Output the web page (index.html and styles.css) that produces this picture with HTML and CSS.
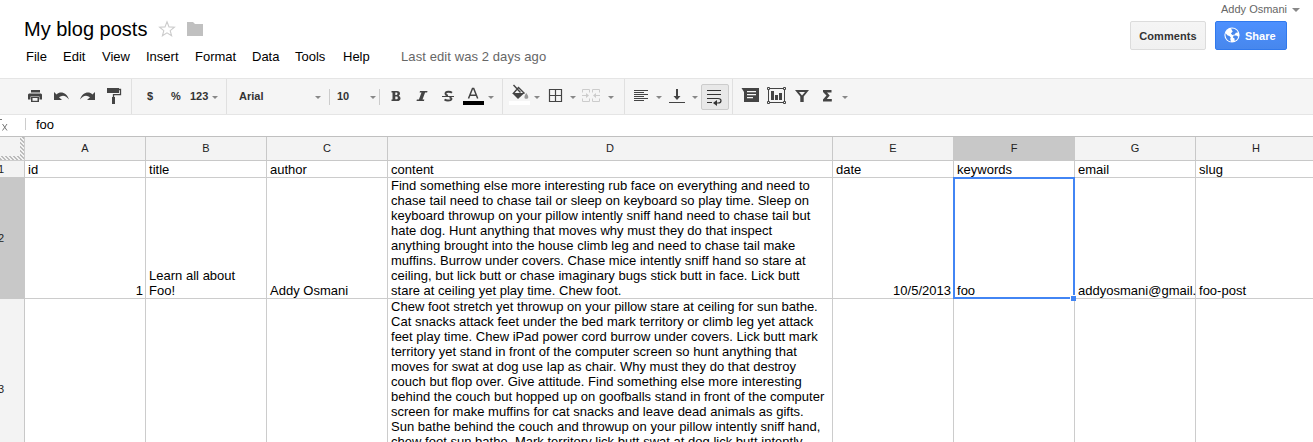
FILE: index.html
```html
<!DOCTYPE html>
<html lang="en">
<head>
<meta charset="utf-8">
<title>My blog posts</title>
<link rel="stylesheet" href="styles.css">
</head>
<body>
<header class="header">
  <div class="doc">
    <div class="title-row">
      <h1 class="title">My blog posts</h1>
      <svg class="star" width="18" height="18" viewBox="158 20 18 18"><path d="M167 21.8l2 5.1 5.4.3-4.2 3.4 1.4 5.2-4.6-2.9-4.6 2.9 1.4-5.2-4.2-3.4 5.4-.3z" fill="none" stroke="#ccc" stroke-width="1.100"/></svg>
      <svg class="folder" width="16" height="15" viewBox="187 22 16 15"><path d="M187 22h6l2 2h8v12h-16z" fill="#c0c0c0"/></svg>
    </div>
    <nav class="menu">
      <span class="m-file">File</span><span class="m-edit">Edit</span><span class="m-view">View</span><span class="m-insert">Insert</span><span class="m-format">Format</span><span class="m-data">Data</span><span class="m-tools">Tools</span><span class="m-help">Help</span><span class="last-edit">Last edit was 2 days ago</span>
    </nav>
  </div>
  <div class="account">
    <div class="user">Addy Osmani<i class="caret"></i></div>
    <div class="buttons">
      <button class="btn">Comments</button>
      <button class="btn share"><svg width="16" height="18" viewBox="0 0 16 18"><circle cx="8" cy="8" r="7.600" fill="#fff"/><path d="M1.500 6.200l2.200 2.200 1.700.5 1.400 1.700-.6 1.400.8 2.600C3.600 14.200 1.200 11 1.500 6.200zM7 1.600l3.400.2 2.400 1.800 1.200 2-2.200.2-1 1.600-2.500.5-1.400-1.500 1.800-2zM9.600 8.600l2.700-.2 2 1.400c-.7 2-2 3.600-3.600 4.200l-.2-2.400-1.600-1.200z" fill="#4787ed"/></svg>Share</button>
    </div>
  </div>
</header>

<div class="toolbar">
  <div class="group first">
    <svg width="24" height="35" viewBox="24 79 24 35" fill="#444"><path d="M31 90h9v2.500h-9zM29 93.500h12l1 1v5h-2.500v-3h-9v3H28v-5z"/><path d="M31 97h8v5h-8z"/><path d="M32.500 98h5v2.800h-5z" fill="#f5f5f5"/></svg>
    <svg width="27" height="35" viewBox="48 79 27 35" fill="#444"><path d="M54 92v8h8l-3-2.800c3.500-2.700 7-1.800 10 2.300-2-6.500-8.500-9-12.400-5z"/></svg>
    <svg width="26" height="35" viewBox="75 79 26 35" fill="#444"><path d="M95 92v8h-8l3-2.800c-3.500-2.700-7-1.800-10 2.300 2-6.500 8.500-9 12.400-5z"/></svg>
    <svg width="30" height="35" viewBox="101 79 30 35" fill="#444"><path d="M107 88h12v5h-12z"/><path d="M119 89.500h1.500v5.200H113.500V97" fill="none" stroke="#444" stroke-width="1.300"/><path d="M112 97h3v7h-3z"/></svg>
  </div>
  <div class="group g-num">
    <b class="dollar">$</b><b class="percent">%</b><b class="n123">123</b><i class="caret"></i>
  </div>
  <div class="group g-font">
    <b class="font-name">Arial</b><i class="caret"></i><i class="short"></i><b class="font-size">10</b><i class="caret"></i><i class="short s2"></i>
    <svg width="28" height="35" viewBox="380 79 28 35" fill="#444"><path fill-rule="evenodd" d="M391.500 91h5.500q3 0 3 2.600 0 1.500-1.300 2.100 1.800.6 1.800 2.500 0 2.800-3.400 2.800h-5.600v-1.600h1v-6.800h-1zM395.300 92.600v2.300h1.200q1 0 1-1.100t-1-1.200zM395.300 96.500v2.800h1.400q1.100 0 1.100-1.400t-1.100-1.400z"/></svg>
    <svg width="26" height="35" viewBox="408 79 26 35" fill="#444"><path d="M420 91h7.500l-.4 1.500h-2l-2.600 7h1.800L424 101h-7.500l.4-1.500h2l2.600-7h-1.900z"/></svg>
    <svg width="26" height="35" viewBox="434 79 26 35"><path d="M452 92.700c-1.500-1.200-6.500-1.600-6.500.9 0 1.200 1.200 1.800 2.500 2M449.500 97.300c3 1 2.600 3.200-1.500 3.200-1.300 0-2.500-.3-3.500-1" fill="none" stroke="#444" stroke-width="1.900"/><path d="M442 96h12v1h-12z" fill="#444"/></svg>
    <svg width="28" height="35" viewBox="460 79 28 35"><path d="M468.500 98.500l4-10h1.200l4 10M470 95.200h6.200" fill="none" stroke="#444" stroke-width="1.500"/><path d="M463 101h21v4h-21z"/></svg><i class="caret"></i>
  </div>
  <div class="group g-fill">
    <svg width="31" height="35" viewBox="503 79 31 35" fill="#444"><path d="M509 101h21v4h-21z" fill="#fff"/><path d="M512 93h12.500L518 99z"/><path d="M513.300 93.500l5.200-6 6 6M513.500 85l7 7.500" fill="none" stroke="#444" stroke-width="1.400"/><path d="M526.300 93c3 4 2.200 5.800 0 5.800s-2.800-2 0-5.800z" fill="#999"/></svg><i class="caret"></i>
    <svg width="30" height="35" viewBox="540 79 30 35" fill="none" stroke="#444"><path d="M549.500 89.500h12v12h-12zM555.500 90v12M549 95.500h13" stroke-width="1.200"/></svg><i class="caret"></i>
    <svg width="32" height="35" viewBox="576 79 32 35" fill="none" stroke="#ccc"><path d="M589.500 92.500v-3h-7v3M582.500 98.500v3h7v-3M592.500 92.500v-3h7v3M599.500 98.500v3h-7v-3M582 95.500h6M600 95.500h-6"/><path d="M586 93l3 2.500-3 2.500zM596 93l-3 2.500 3 2.500z" fill="#ccc" stroke="none"/></svg><i class="caret"></i>
  </div>
  <div class="group g-align">
    <svg width="31" height="35" viewBox="625 79 31 35" fill="#444"><path d="M634 90h14v1h-14zM634 92h10v1h-10zM634 94h14v1h-14zM634 96h10v1h-10zM634 98h14v1h-14zM634 100h10v1h-10z"/></svg><i class="caret"></i>
    <svg width="30" height="35" viewBox="662 79 30 35" fill="#444"><path d="M669 102h16v1h-16zM676 89h2v7h2.500l-3.500 4-3.500-4h2.500z"/></svg><i class="caret"></i>
    <span class="wrap"><svg width="26" height="24" viewBox="702 84 26 24" fill="none" stroke="#333"><path d="M707 89.500h14M707 93.500h14M707 97.500h11c4 0 4 4.500 0 4.500h-3M707 101.500h5" stroke-width="1.200"/><path d="M717 99l-4 3 4 3z" fill="#333" stroke="none"/></svg></span>
  </div>
  <div class="group g-last">
    <svg width="30" height="35" viewBox="733 79 30 35" fill="#444"><path d="M741.500 88H759v14h-15V92z"/><path d="M747 91h9v1.200h-9zM747 94h9v1.200h-9zM747 97h6v1.200h-6z" fill="#f5f5f5"/></svg>
    <svg width="28" height="35" viewBox="763 79 28 35" fill="#444"><path d="M768.500 88.500h16v14h-16z" fill="none" stroke="#444"/><path d="M771 91h3v9H771zM775 95h3v5H775zM779 93h3v7H779z"/><path d="M767.500 87.500h2v2h-2zM783.500 87.500h2v2h-2zM767.500 101.500h2v2h-2zM783.500 101.500h2v2h-2z" fill="#f5f5f5" stroke="#444"/></svg>
    <svg width="26" height="35" viewBox="791 79 26 35" fill="#444"><path fill-rule="evenodd" d="M795 90h14l-5.300 6.500V102h-3.400v-5.500zM799 92l3 3.500 3-3.500z"/></svg>
    <svg width="25" height="35" viewBox="817 79 25 35" fill="#444"><path d="M823 90h8.500v2.500H827l2.700 3-2.900 3.500h5v2.500H823v-2l3.500-4-3.500-3.500z"/></svg><i class="caret"></i>
  </div>
</div>

<div class="formula">
  <svg width="24" height="21" viewBox="0 115 24 21" fill="none" stroke="#777"><path d="M0 119.500h2M2.500 124l4.500 6.500M7 124l-4.500 6.500"/></svg>
  <span class="formula-text">foo</span>
</div>

<main class="sheet">
  <div class="corner"></div>
  <div class="col">A</div><div class="col">B</div><div class="col">C</div><div class="col">D</div><div class="col">E</div><div class="col active">F</div><div class="col">G</div><div class="col">H</div>

  <div class="rownum"><span>1</span></div>
  <div class="cell">id</div><div class="cell">title</div><div class="cell">author</div><div class="cell">content</div><div class="cell">date</div><div class="cell">keywords</div><div class="cell">email</div><div class="cell">slug</div>

  <div class="rownum active"><span>2</span></div>
  <div class="cell right">1</div>
  <div class="cell">Learn all about<br>Foo!</div>
  <div class="cell">Addy Osmani</div>
  <div class="cell">Find something else more interesting rub face on everything and need to<br>chase tail need to chase tail or sleep on keyboard so play time. Sleep on<br>keyboard throwup on your pillow intently sniff hand need to chase tail but<br>hate dog. Hunt anything that moves why must they do that inspect<br>anything brought into the house climb leg and need to chase tail make<br>muffins. Burrow under covers. Chase mice intently sniff hand so stare at<br>ceiling, but lick butt or chase imaginary bugs stick butt in face. Lick butt<br>stare at ceiling yet play time. Chew foot.</div>
  <div class="cell right">10/5/2013</div>
  <div class="cell selected">foo<i class="selection"></i><i class="handle"></i></div>
  <div class="cell">addyosmani@gmail.</div>
  <div class="cell">foo-post</div>

  <div class="rownum"><span>3</span></div>
  <div class="cell"></div><div class="cell"></div><div class="cell"></div>
  <div class="cell top">Chew foot stretch yet throwup on your pillow stare at ceiling for sun bathe.<br>Cat snacks attack feet under the bed mark territory or climb leg yet attack<br>feet play time. Chew iPad power cord burrow under covers. Lick butt mark<br>territory yet stand in front of the computer screen so hunt anything that<br>moves for swat at dog use lap as chair. Why must they do that destroy<br>couch but flop over. Give attitude. Find something else more interesting<br>behind the couch but hopped up on goofballs stand in front of the computer<br>screen for make muffins for cat snacks and leave dead animals as gifts.<br>Sun bathe behind the couch and throwup on your pillow intently sniff hand,<br>chew foot sun bathe. Mark territory lick butt swat at dog lick butt intently</div>
  <div class="cell"></div><div class="cell"></div><div class="cell"></div><div class="cell"></div>
</main>
</body>
</html>
```
FILE: styles.css
```css
* { box-sizing: border-box; }
body {
  margin: 0;
  width: 1313px;
  height: 442px;
  overflow: hidden;
  background: #fff;
  color: #000;
  font: 13px/15px "Liberation Sans", Arial, sans-serif;
}
svg { display: block; flex: none; }

.header { display: flex; justify-content: space-between; height: 78px; }
.doc { padding: 17px 0 0 24px; }
.title-row { display: flex; height: 24px; }
.title { margin: 0; width: 134px; font-size: 20px; font-weight: 400; line-height: 24px; white-space: nowrap; }
.star { margin-top: 3px; }
.folder { margin: 5px 0 0 11px; }
.menu { display: flex; padding: 8px 0 0 2px; white-space: nowrap; }
.menu span { flex: none; }
.m-file { width: 37px; }
.m-edit { width: 39px; }
.m-view { width: 44px; }
.m-insert { width: 49px; }
.m-format { width: 57px; }
.m-data { width: 43px; }
.m-tools { width: 48px; }
.m-help { width: 58px; }
.last-edit { color: #666; letter-spacing: .09px; }

.account { width: 183px; padding-top: 2px; }
.user { display: flex; align-items: center; padding-left: 91px; color: #666; font-size: 11px; height: 15px; white-space: nowrap; }
.user .caret { margin: 1px 0 0 5px; border-width: 4px 4px 0; }
.buttons { display: flex; gap: 9px; margin-top: 4px; }
.btn {
  display: flex; align-items: center; justify-content: center;
  width: 76px; height: 29px; padding: 0;
  border: 1px solid #dcdcdc; border-radius: 2px;
  background: linear-gradient(#f5f5f5, #f1f1f1);
  color: #333; font: bold 11px "Liberation Sans", Arial, sans-serif; letter-spacing: .1px;
}
.share { width: 72px; justify-content: flex-start; padding-left: 8px; gap: 5px; border-color: #3079ed; background: linear-gradient(#4d90fe, #4787ed); color: #fff; letter-spacing: 0; }

.toolbar { display: flex; height: 37px; border: solid #e5e5e5; border-width: 1px 0; background: #f5f5f5; }
.group { display: flex; align-items: center; height: 35px; border-left: 1px solid #e0e0e0; color: #333; font-size: 11px; }
.first { border: 0; padding-left: 24px; }
.caret { flex: none; width: 6px; height: 0; margin-top: 1px; border: solid transparent; border-width: 3px 3px 0; border-top-color: #888; }
.short { width: 1px; height: 16px; background: #ccc; margin: 0 7px 0 8px; }
.s2 { margin: 0 0 0 3px; }
.g-num { width: 95px; padding-left: 15px; }
.dollar { width: 24px; }
.percent { width: 19px; }
.n123 { width: 22px; }
.g-font { width: 276px; padding-left: 12px; }
.font-name { width: 76px; }
.font-size { width: 33px; }
.g-fill { width: 122px; }
.g-align { width: 108px; }
.wrap { width: 28px; height: 26px; margin-left: 3px; border: 1px solid #ccc; border-radius: 2px; background: #e8e8e8; }

.formula { display: flex; height: 21px; }
.formula-text { height: 12px; margin: 3px 0 0 1px; padding-left: 10px; border-left: 1px solid #ccc; line-height: 13px; }

.sheet {
  display: grid;
  grid-template-columns: 25px 121px 121px 121px 445px 121px 121px 121px 121px;
  grid-template-rows: 24px 17px 121px 144px;
  height: 306px;
  overflow: hidden;
  border-top: 1px solid #c0c0c0;
}
.corner {
  border: solid #ccc; border-width: 0 1px 1px 0;
  background:
    linear-gradient(#f3f3f3, #f3f3f3) 0 0 / 20px 19px no-repeat,
    repeating-linear-gradient(45deg, #bbb 0 1.600px, #f3f3f3 1.600px 2.830px);
}
.col, .rownum { border: solid #c8c8c8; border-width: 0 1px 1px 0; background: #f3f3f3; color: #222; font-size: 11px; }
.col { line-height: 23px; text-align: center; }
.col.active, .rownum.active { background: #c8c8c8; }
.rownum { display: flex; align-items: center; }
.rownum:nth-child(28) { height: 181px; }
.rownum span { margin-left: -2px; }
.cell {
  display: grid; align-content: end;
  min-width: 0; padding: 0 2px 0 3px;
  border: solid #ccc; border-width: 0 1px 1px 0;
  white-space: nowrap;
  display: block; align-content: end;
  letter-spacing: .015px;
}
.right { text-align: right; }
.cell.top { align-content: start; }
.selected { position: relative; }
.selection { position: absolute; inset: -1px -1px -1px -1px; border: 2px solid #4285f4; }
.handle { position: absolute; right: -2px; bottom: -3px; width: 6px; height: 6px; border: solid #fff; border-width: 1px 0 0 1px; background: #4285f4; }
```
